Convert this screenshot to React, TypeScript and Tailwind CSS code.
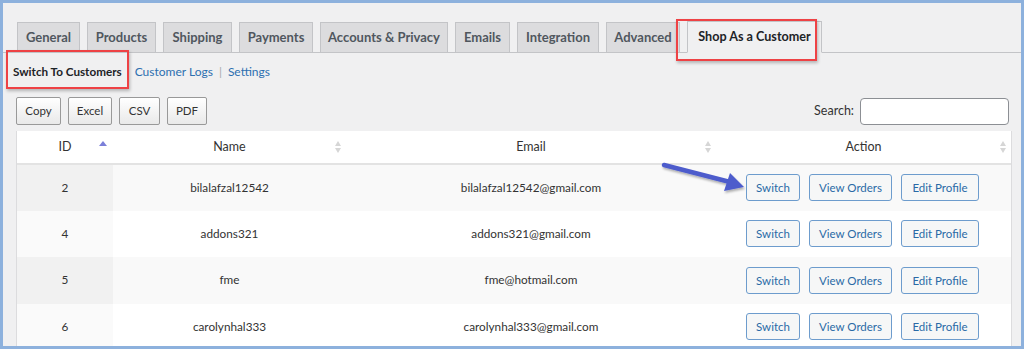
import React from 'react';

const tabs = [
  { label: 'General', w: 'w-[63px]' },
  { label: 'Products', w: 'w-[69px]' },
  { label: 'Shipping', w: 'w-[69px]' },
  { label: 'Payments', w: 'w-[74px]' },
  { label: 'Accounts & Privacy', w: 'w-[128px]' },
  { label: 'Emails', w: 'w-[55px]' },
  { label: 'Integration', w: 'w-[82px]' },
  { label: 'Advanced', w: 'w-[74px]' },
];

const customers = [
  { id: 2, name: 'bilalafzal12542', email: 'bilalafzal12542@gmail.com' },
  { id: 4, name: 'addons321', email: 'addons321@gmail.com' },
  { id: 5, name: 'fme', email: 'fme@hotmail.com' },
  { id: 6, name: 'carolynhal333', email: 'carolynhal333@gmail.com' },
];

function SortIcon({ active }: { active?: boolean }) {
  if (active) {
    return (
      <svg width="8" height="10" viewBox="0 0 8 10" className="absolute right-[6px] top-[10px]">
        <path d="M0 5 L4 0 L8 5 Z" fill="#7b7fd9" />
      </svg>
    );
  }
  return (
    <svg width="8" height="14" viewBox="0 0 8 14" className="absolute right-[4px] top-[9px]">
      <path d="M1 6 L4 1 L7 6 Z" fill="#d6d6d6" />
      <path d="M1 8 L4 13 L7 8 Z" fill="#d6d6d6" />
    </svg>
  );
}

function ActionButton({ children, w }: { children: React.ReactNode; w: string }) {
  return (
    <button className={`${w} h-[27px] rounded-[3px] border border-[#6d9ccd] bg-[#f6f7f7] text-[11.5px] text-[#2a6aa6]`}>
      {children}
    </button>
  );
}

export default function App() {
  return (
    <div
      className="relative w-[1024px] h-[349px] overflow-hidden border-[3px] border-[#8db1dd] bg-[#f0f0f1] text-[#3c434a]"
      style={{ fontFamily: 'Lato, "Liberation Sans", sans-serif' }}
    >
      {/* Tabs */}
      <div className="flex items-end gap-[7px] pl-[14px] pt-[18px] border-b border-[#c3c4c7] h-[50px]">
        {tabs.map((t) => (
          <div
            key={t.label}
            className={`${t.w} h-[31px] -mb-px flex items-center justify-center border border-[#c3c4c7] bg-[#dcdcde] text-[13px] font-bold text-[#50575e]`}
          >
            {t.label}
          </div>
        ))}
        <div className="w-[135px] h-[32px] -mb-px flex items-center justify-center border border-[#c3c4c7] border-b-[#f0f0f1] bg-[#f0f0f1] text-[12.6px] font-bold text-[#1d2327]">
          Shop As a Customer
        </div>
      </div>

      {/* Sub navigation */}
      <div className="flex items-center h-[38px] pl-[10px] text-[12px]">
        <span className="font-bold text-[11.7px] text-[#1d2327]">Switch To Customers</span>
        <span className="ml-[13px] text-[#2d6fb0]">Customer Logs</span>
        <span className="mx-[6px] text-[#a7aaad]">|</span>
        <span className="text-[#2d6fb0]">Settings</span>
      </div>

      {/* Export buttons and search */}
      <div className="flex items-center justify-between pl-[13px] pr-[12px] mt-[6px]">
        <div className="flex gap-[7px]">
          {[
            ['Copy', 'w-[45px]'],
            ['Excel', 'w-[44px]'],
            ['CSV', 'w-[41px]'],
            ['PDF', 'w-[40px]'],
          ].map(([label, w]) => (
            <button
              key={label}
              className={`${w} h-[28px] rounded-[2px] border border-[#999] bg-gradient-to-b from-white to-[#e9e9e9] text-[11.5px] text-[#333]`}
            >
              {label}
            </button>
          ))}
        </div>
        <div className="flex items-center gap-[6px]">
          <span className="text-[12.5px] text-[#333]">Search:</span>
          <div className="w-[149px] h-[27px] rounded-[4px] border border-[#8c8f94] bg-white" />
        </div>
      </div>

      {/* Table */}
      <div className="ml-[13px] mt-[6px] w-[996px] border-l border-r border-[#dcdcde] bg-white">
        <table className="w-full border-collapse text-[11.75px] text-[#333]">
          <thead>
            <tr className="h-[33px] border-b-2 border-[#e3e3e3] text-[12.5px]">
              <th className="relative w-[96px] font-normal">
                ID
                <SortIcon active />
              </th>
              <th className="relative w-[233px] font-normal">
                Name
                <SortIcon />
              </th>
              <th className="relative w-[370px] font-normal">
                Email
                <SortIcon />
              </th>
              <th className="relative font-normal">
                Action
                <SortIcon />
              </th>
            </tr>
          </thead>
          <tbody>
            {customers.map((c, i) => (
              <tr key={c.id} className={`h-[46.5px] ${i % 2 === 0 ? 'bg-[#f9f9f9]' : 'bg-white'}`}>
                <td className={`text-center ${i % 2 === 0 ? 'bg-[#f1f1f1]' : 'bg-[#fafafa]'}`}>{c.id}</td>
                <td className="text-center">{c.name}</td>
                <td className="text-center">{c.email}</td>
                <td>
                  <div className="flex justify-center gap-[9px] pr-[2px]">
                    <ActionButton w="w-[54px]">Switch</ActionButton>
                    <ActionButton w="w-[83px]">View Orders</ActionButton>
                    <ActionButton w="w-[78px]">Edit Profile</ActionButton>
                  </div>
                </td>
              </tr>
            ))}
          </tbody>
        </table>
      </div>

      {/* Highlight boxes */}
      <div className="absolute left-[673px] top-[16px] w-[141px] h-[42px] border-2 border-[#ee4245] shadow-[1px_2px_3px_rgba(0,0,0,0.25)]" />
      <div className="absolute left-[3px] top-[47px] w-[123px] h-[39px] border-2 border-[#ee4245] shadow-[1px_2px_3px_rgba(0,0,0,0.25)]" />

      {/* Arrow */}
      <svg className="absolute left-[655px] top-[155px]" width="95" height="40" viewBox="0 0 95 40">
        <defs>
          <filter id="sh" x="-20%" y="-50%" width="140%" height="200%">
            <feDropShadow dx="1" dy="2" stdDeviation="1.2" floodColor="#000" floodOpacity="0.3" />
          </filter>
        </defs>
        <g filter="url(#sh)">
          <line x1="6" y1="7" x2="72" y2="24" stroke="#4d5ccc" strokeWidth="4.5" strokeLinecap="round" />
          <path d="M86 29 L66 33 L72 15 Z" fill="#4d5ccc" />
        </g>
      </svg>
    </div>
  );
}
